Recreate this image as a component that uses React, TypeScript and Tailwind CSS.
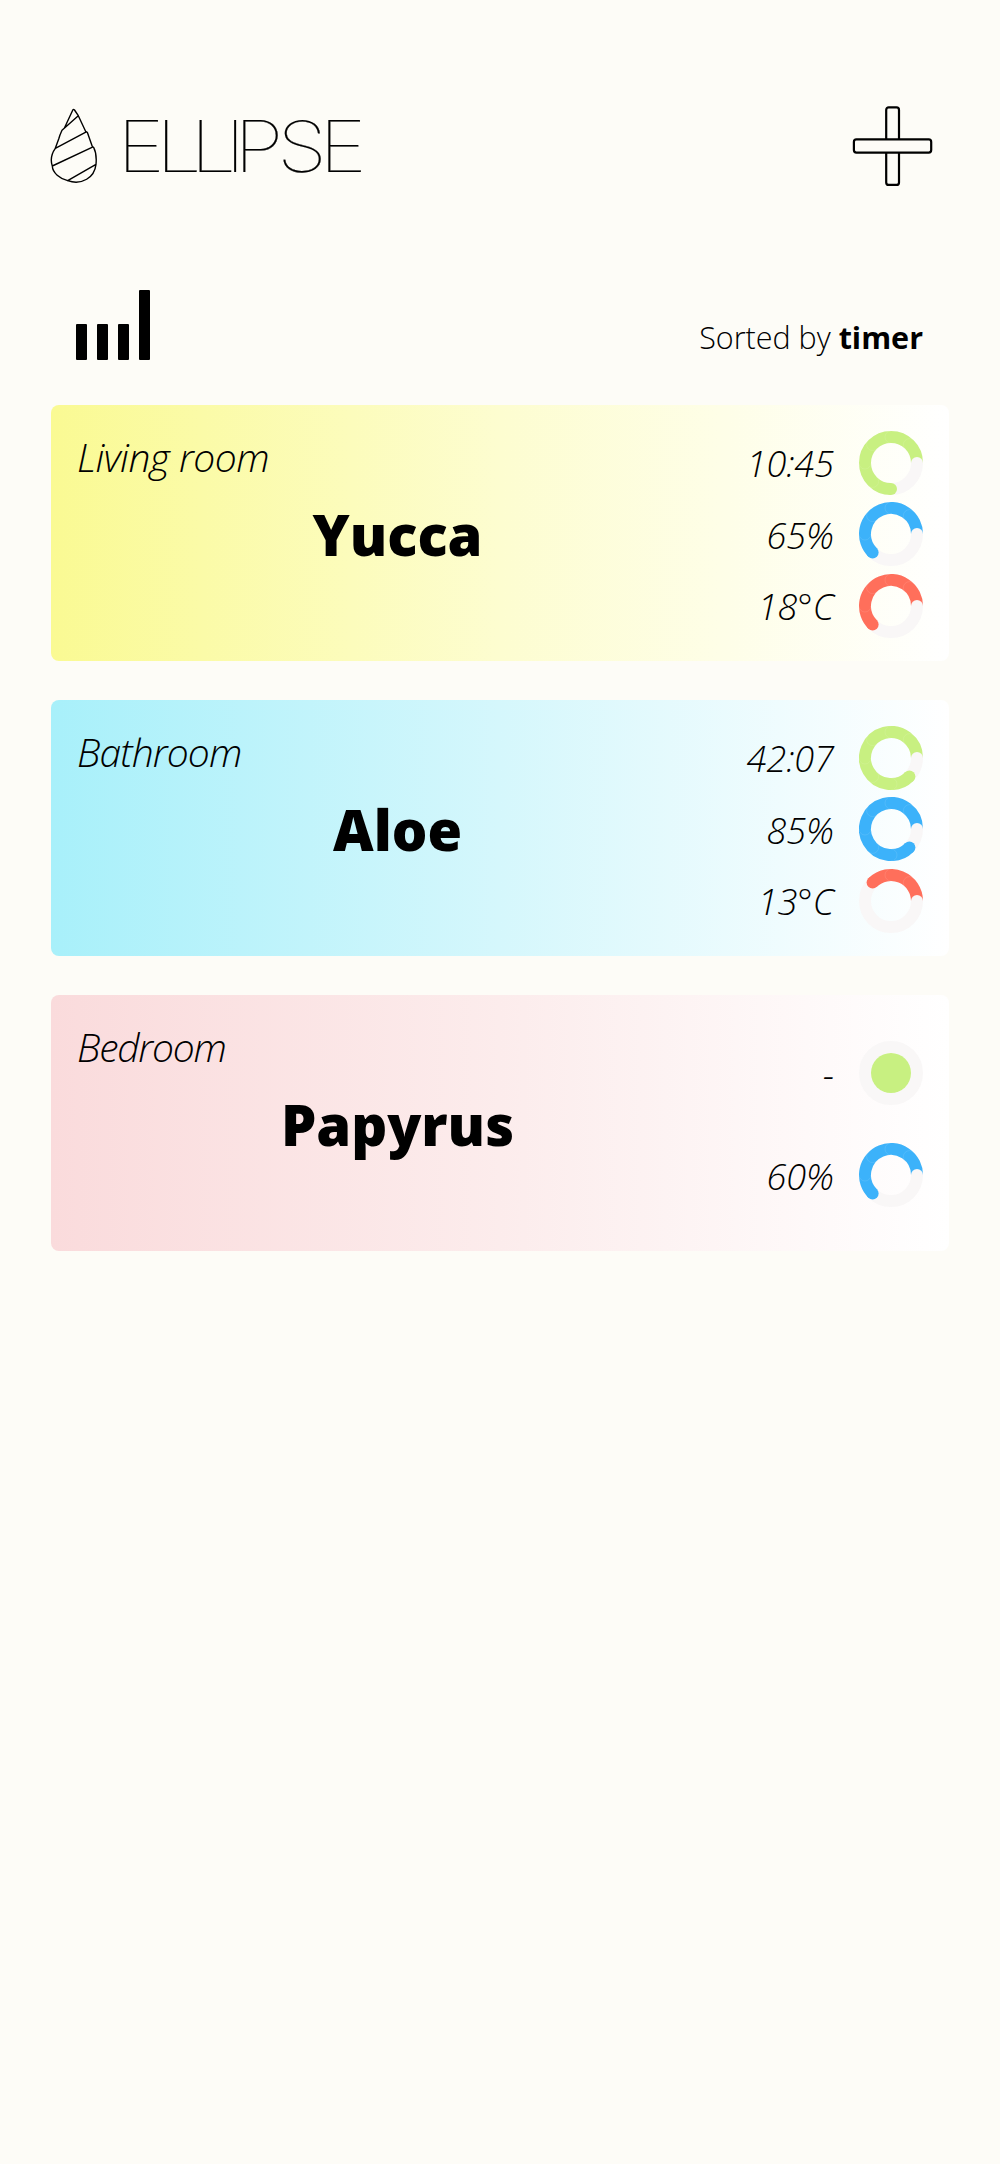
type Gauge = { label: string; color: string; sweep: number; full?: boolean };
type Plant = { room: string; name: string; tracking: string; background: string; spacing: string; gauges: Gauge[] };

const GREEN = '#c8f081';
const BLUE = '#3cb2fa';
const RED = '#ff6f5b';

const plants: Plant[] = [
  {
    room: 'Living room',
    name: 'Yucca',
    tracking: 'tracking-[-0.5px]',
    background: 'bg-[linear-gradient(90deg,#fafa93_0%,#fdfdd0_50%,#ffffff_100%)]',
    spacing: 'gap-[7.7px]',
    gauges: [
      { label: '10:45', color: GREEN, sweep: 270 },
      { label: '65%', color: BLUE, sweep: 225 },
      { label: '18°C', color: RED, sweep: 225 },
    ],
  },
  {
    room: 'Bathroom',
    name: 'Aloe',
    tracking: 'tracking-[-0.9px]',
    background: 'bg-[linear-gradient(90deg,#a8f0fa_0%,#d5f7fc_50%,#ffffff_100%)]',
    spacing: 'gap-[7.7px]',
    gauges: [
      { label: '42:07', color: GREEN, sweep: 315 },
      { label: '85%', color: BLUE, sweep: 315 },
      { label: '13°C', color: RED, sweep: 135 },
    ],
  },
  {
    room: 'Bedroom',
    name: 'Papyrus',
    tracking: 'tracking-[-1.2px]',
    background: 'bg-[linear-gradient(90deg,#fadbdc_0%,#fcecec_50%,#ffffff_100%)]',
    spacing: 'gap-[38.3px]',
    gauges: [
      { label: '-', color: GREEN, sweep: 0, full: true },
      { label: '60%', color: BLUE, sweep: 225 },
    ],
  },
];

// Point on the ring, measured counter-clockwise from three o'clock.
const at = (deg: number, r = 26) => {
  const a = (deg * Math.PI) / 180;
  return [32 + r * Math.cos(a), 32 - r * Math.sin(a)];
};

function Ring({ color, sweep, full }: Gauge) {
  const [ex, ey] = at(sweep);
  const seams: number[] = [];
  for (let d = 45; d < sweep; d += 45) seams.push(d);
  return (
    <svg viewBox="0 0 64 64" className="h-16 w-16 shrink-0" fill="none">
      <circle cx="32" cy="32" r="26" stroke="#f9f7f7" strokeWidth="12" />
      {full ? (
        <circle cx="32" cy="32" r="20" fill={color} />
      ) : (
        <>
          <path d={`M58 32A26 26 0 ${sweep > 180 ? 1 : 0} 0 ${ex} ${ey}`} stroke={color} strokeWidth="12" />
          <circle cx={ex} cy={ey} r="6" fill={color} />
          {seams.map((d) => {
            const [ox, oy] = at(d, 32);
            const [ix, iy] = at(d, 20);
            return <path key={d} d={`M${ox} ${oy}A6 6 0 0 0 ${ix} ${iy}`} stroke="#fff" strokeOpacity=".14" strokeWidth=".7" />;
          })}
          <circle cx="58" cy="32" r="6" fill="#f9f7f7" />
        </>
      )}
    </svg>
  );
}

function PlantCard({ plant }: { plant: Plant }) {
  return (
    <article className={`flex h-64 w-[898px] justify-between rounded-[8px] pr-[26px] ${plant.background}`}>
      <div className="flex w-[693px] flex-col pl-[26px] pt-[25px]">
        <span className={`text-[39px] leading-[54px] font-light italic ${plant.tracking}`}>{plant.room}</span>
        <h2 className="mt-[12px] -ml-[26px] text-center text-[56px] leading-[76px] font-extrabold">{plant.name}</h2>
      </div>
      <div className={`flex flex-col justify-center pt-[2.6px] ${plant.spacing}`}>
        {plant.gauges.map((g) => (
          <div key={g.label} className="flex items-center justify-end gap-[25px]">
            <span className="pt-[3px] text-[36px] leading-[48px] font-light italic">{g.label}</span>
            <Ring {...g} />
          </div>
        ))}
      </div>
    </article>
  );
}

function Logo() {
  return (
    <svg viewBox="0 0 50 78" className="h-[78px] w-[50px]" fill="none" stroke="#000" strokeWidth="1.4" strokeLinejoin="round" strokeLinecap="round">
      <path d="M14.300 22.300L22.800 4Q23.700 2.700 24.500 4L28.300 9.700L12 24.300Q9.800 29 8.700 33L5.300 42.300L36.300 25.900M28.300 9.700L35.700 25.500L37.300 26.300L42.300 40.500L43.600 41.300C45.500 45 46.600 52 46 58.300L17.700 74.700M5.300 42.300C2 47 0.300 54 2.300 60L42.500 41.200M2.300 60C2.500 67 10 72.500 17.700 74.700C32 79.500 44.500 71.500 46 58.300" />
    </svg>
  );
}

function Wordmark() {
  return (
    <svg viewBox="0 0 260 90" className="ml-[18px] h-[90px] w-[260px] overflow-visible" role="heading" aria-level={1}>
      <text
        transform="translate(0 65.6) scale(1.16 1.01)"
        x="-0.7 32.8 62.4 92.2 100.3 137.2 173.5"
        y="0"
        stroke="#000"
        strokeWidth=".2"
        className="font-['Inter',sans-serif] text-[70px] font-thin"
      >
        ELLIPSE
      </text>
    </svg>
  );
}

export default function App() {
  return (
    <main className="h-[2164px] w-[1000px] bg-[#fdfcf7] font-['Open_Sans',sans-serif] text-black">
      <header className="flex h-[290px] items-start justify-between pt-[106px] pr-[67px] pl-[50px]">
        <div className="flex items-start">
          <Logo />
          <Wordmark />
        </div>
        <button aria-label="Add plant" className="h-20 w-20">
          <svg viewBox="0 0 80 80" className="h-20 w-20 overflow-visible" stroke="#000" strokeWidth="2.200" fill="#fdfcf7">
            <rect x="33.200" y="1.400" width="12.800" height="77.500" rx="2.500" />
            <rect x="0.900" y="33.400" width="77.300" height="13.200" rx="2.500" />
          </svg>
        </button>
      </header>
      <div className="flex h-[115px] items-start justify-between pr-[77px] pl-[75.5px]">
        <div className="flex h-[70px] items-end gap-[10.200px]">
          <i className="h-[36.500px] w-[11px] rounded-[1px] bg-black" />
          <i className="h-[36.500px] w-[11px] rounded-[1px] bg-black" />
          <i className="h-[36.500px] w-[11px] rounded-[1px] bg-black" />
          <i className="h-[70px] w-[11px] rounded-[1px] bg-black" />
        </div>
        <p className="pt-[26px] text-[30.5px] leading-[42px] font-light">
          Sorted by <b className="font-bold">timer</b>
        </p>
      </div>
      <section className="flex flex-col gap-[39px] pl-[51px]">
        {plants.map((p) => (
          <PlantCard key={p.name} plant={p} />
        ))}
      </section>
    </main>
  );
}
